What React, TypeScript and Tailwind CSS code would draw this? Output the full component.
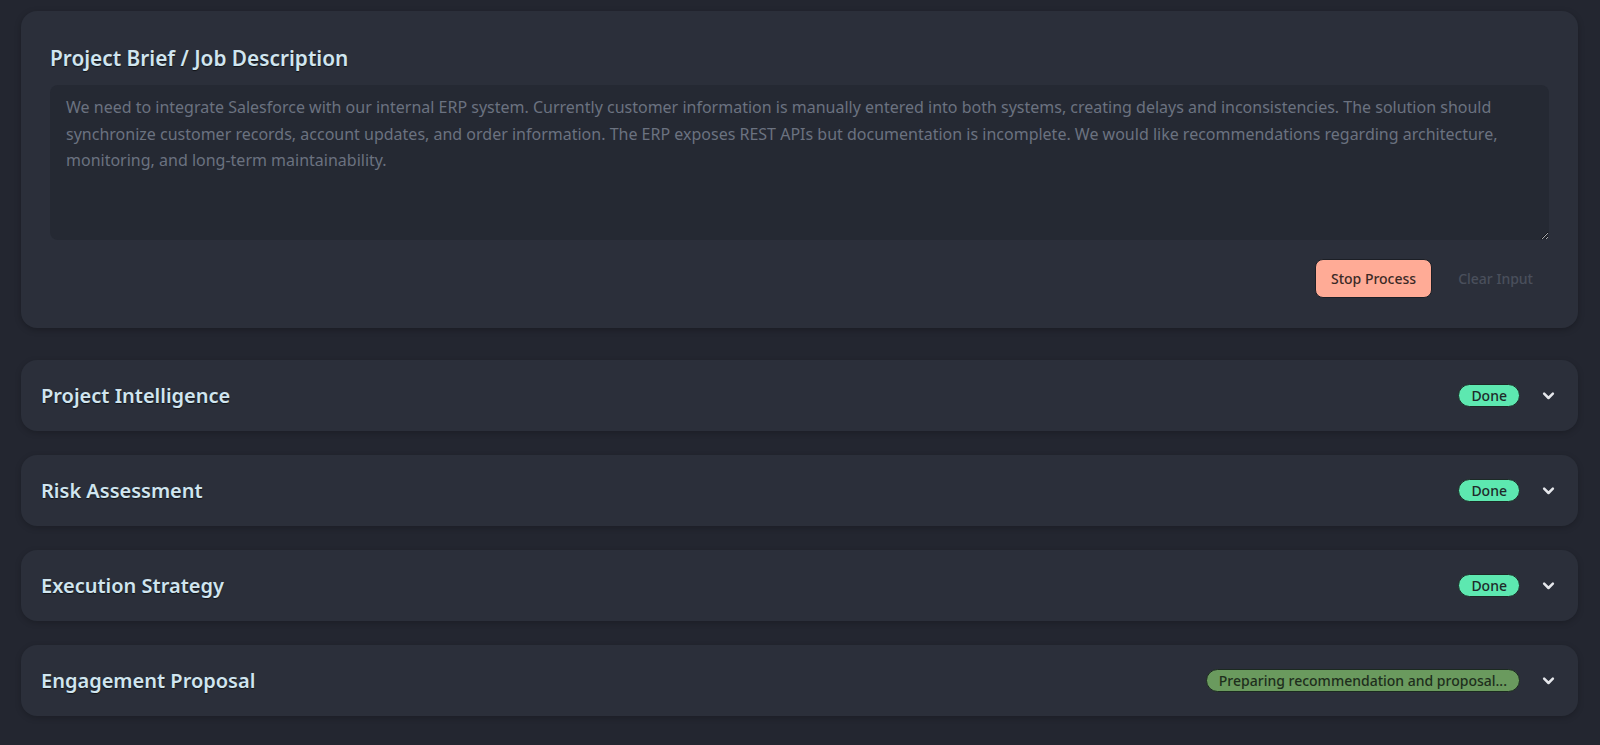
import React from "react";

const font = { fontFamily: '"Noto Sans", "Open Sans", sans-serif' };

const sections: { title: string; status: string; done: boolean }[] = [
  { title: "Project Intelligence", status: "Done", done: true },
  { title: "Risk Assessment", status: "Done", done: true },
  { title: "Execution Strategy", status: "Done", done: true },
  { title: "Engagement Proposal", status: "Preparing recommendation and proposal...", done: false },
];

function Chevron() {
  return (
    <svg width="15" height="15" viewBox="0 0 24 24" fill="none" stroke="#e5e7eb" strokeWidth="4" strokeLinecap="round" strokeLinejoin="round">
      <path d="M5 9l7 7 7-7" />
    </svg>
  );
}

export default function App() {
  return (
    <div className="min-h-screen bg-[#232630] pl-[21px] pr-[22px] pt-[11px] pb-[30px]" style={font}>
      <div className="rounded-2xl bg-[#2b2f3a] px-[29px] pt-[33px] pb-[30px] shadow-[0_2px_6px_rgba(0,0,0,0.25)]">
        <h2 className="text-[20.8px] leading-[28px] font-semibold text-[#d0e5ef] [text-shadow:0_1px_1px_rgba(0,0,0,0.6)]">
          Project Brief / Job Description
        </h2>
        <textarea
          readOnly
          className="mt-[13px] block w-full h-[155px] rounded-lg bg-[#252933] px-[16px] pt-[9px] text-[16px] leading-[26.5px] text-[#6b7280] outline-none"
          defaultValue="We need to integrate Salesforce with our internal ERP system. Currently customer information is manually entered into both systems, creating delays and inconsistencies. The solution should synchronize customer records, account updates, and order information. The ERP exposes REST APIs but documentation is incomplete. We would like recommendations regarding architecture, monitoring, and long-term maintainability."
        />
        <div className="mt-[19px] flex justify-end items-center gap-[10px]">
          <button className="h-[39px] px-[15px] rounded-lg bg-[#ffab96] border border-[#1c1f26] text-[14px] font-medium text-[#3b2a26]">
            Stop Process
          </button>
          <button className="h-[39px] px-[16px] text-[14px] font-medium text-[#4a4f5c]">Clear Input</button>
        </div>
      </div>

      <div className="mt-[32px] flex flex-col gap-[24px]">
        {sections.map((s) => (
          <div
            key={s.title}
            className="h-[71px] rounded-2xl bg-[#2b2f3a] pl-[20px] pr-[22px] flex items-center justify-between shadow-[0_2px_6px_rgba(0,0,0,0.2)]"
          >
            <span className="text-[20px] font-semibold text-[#d0e5ef] [text-shadow:0_1px_1px_rgba(0,0,0,0.6)]">
              {s.title}
            </span>
            <div className="flex items-center gap-[21px]">
              {s.done ? (
                <span className="h-[23px] px-[12px] rounded-full bg-[#5de8b0] border border-[#1c2a26] text-[14px] font-medium text-[#1f2a2a] flex items-center">
                  {s.status}
                </span>
              ) : (
                <span className="h-[23px] px-[12px] rounded-full bg-[#6a9a5e] border border-[#1c2a20] text-[14px] font-medium text-[#1e2e1c] flex items-center">
                  {s.status}
                </span>
              )}
              <Chevron />
            </div>
          </div>
        ))}
      </div>
    </div>
  );
}
